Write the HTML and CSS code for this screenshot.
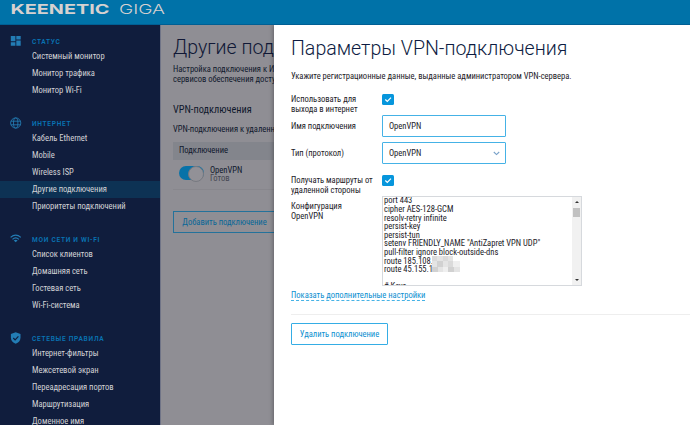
FILE: index.html
```html
<!DOCTYPE html>
<html lang="ru">
<head>
<meta charset="utf-8">
<title>Keenetic Giga</title>
<link rel="stylesheet" href="styles.css">
</head>
<body>
<header class="topbar">
  <svg class="logo" width="170" height="24" viewBox="0 0 170 24">
    <text class="logo-brand" x="10.5" y="13.8" textLength="99" lengthAdjust="spacingAndGlyphs">KEENETIC</text>
    <text class="logo-model" x="119" y="13.8" textLength="46" lengthAdjust="spacingAndGlyphs">GIGA</text>
  </svg>
</header>
<div class="layout">
  <nav class="sidebar">
    <section class="group">
      <svg class="group-icon" viewBox="0 0 12 12"><path d="M.8 1h4.6v5.3H.8zM.8 7.3h4.6v3.5H.8zM6.3 1h4.4v3.4H6.3zM6.3 5.5h4.4v5.3H6.3z" fill="#237db5"/></svg>
      <h2>Статус</h2>
      <ul><li>Системный монитор</li><li>Монитор трафика</li><li>Монитор Wi-Fi</li></ul>
    </section>
    <section class="group">
      <svg class="group-icon" viewBox="0 0 12 12" fill="none" stroke="#237db5" stroke-width=".85"><circle cx="5.7" cy="6" r="5.1"/><ellipse cx="5.7" cy="6" rx="2.2" ry="5.1"/><path d="M.9 4.2h9.6M.9 7.8h9.6"/></svg>
      <h2>Интернет</h2>
      <ul><li>Кабель Ethernet</li><li>Mobile</li><li>Wireless ISP</li><li class="active">Другие подключения</li><li>Приоритеты подключений</li></ul>
    </section>
    <section class="group">
      <svg class="group-icon" viewBox="0 0 12 12" fill="none" stroke="#237db5" stroke-width="1.25"><path d="M.6 4.4Q5.7-.2 10.8 4.4M2.5 6.4Q5.7 3.5 8.9 6.4"/><path d="M3.8 7.4Q5.7 5.9 7.6 7.4L5.7 9.3z" fill="#237db5" stroke="none"/></svg>
      <h2>Мои сети и Wi-Fi</h2>
      <ul><li>Список клиентов</li><li>Домашняя сеть</li><li>Гостевая сеть</li><li>Wi-Fi-система</li></ul>
    </section>
    <section class="group">
      <svg class="group-icon" viewBox="0 0 12 12"><path d="M5.7.2l4.8 1.9v3.7c0 2.9-2 5.1-4.8 6-2.8-.9-4.8-3.1-4.8-6V2.1z" fill="#237db5"/><path d="M3.3 6l1.8 1.8 3.3-3.5" fill="none" stroke="#101d3d" stroke-width="1.2"/></svg>
      <h2>Сетевые правила</h2>
      <ul><li>Интернет-фильтры</li><li>Межсетевой экран</li><li>Переадресация портов</li><li>Маршрутизация</li><li>Доменное имя</li></ul>
    </section>
  </nav>
  <main class="page">
    <h1>Другие под</h1>
    <p class="intro">Настройка подключения к И<br>сервисов обеспечения досту</p>
    <h3>VPN-подключения</h3>
    <p class="sub">VPN-подключения к удаленн</p>
    <div class="table-head">Подключение</div>
    <div class="table-row">
      <span class="switch"></span>
      <div class="conn"><span>OpenVPN</span><span class="state">Готов</span></div>
    </div>
    <button class="add">Добавить подключение</button>
  </main>
</div>
<aside class="drawer">
  <h1>Параметры VPN-подключения</h1>
  <p class="lead">Укажите регистрационные данные, выданные администратором VPN-сервера.</p>
  <div class="form">
    <label>Использовать для<br>выхода в интернет</label>
    <span class="check"><svg viewBox="0 0 11 11"><path d="M2.8 5.5l2 2 3.7-3.9"/></svg></span>
    <label class="name-label">Имя подключения</label>
    <div class="field name-field">OpenVPN</div>
    <label class="type-label">Тип (протокол)</label>
    <div class="field type-field">OpenVPN<svg class="chevron" viewBox="0 0 7 5"><path d="M.8 1l2.7 2.6L6.2 1"/></svg></div>
    <label class="routes-label">Получать маршруты от<br>удаленной стороны</label>
    <span class="check routes-check"><svg viewBox="0 0 11 11"><path d="M2.8 5.5l2 2 3.7-3.9"/></svg></span>
    <label class="config-label">Конфигурация<br>OpenVPN</label>
    <div class="config">
      <div class="config-text">
        <div>port 443</div><div>cipher AES-128-GCM</div><div>resolv-retry infinite</div><div>persist-key</div><div>persist-tun</div><div>setenv FRIENDLY_NAME "AntiZapret VPN UDP"</div><div>pull-filter ignore block-outside-dns</div><div>route 185.108.</div><div>route 45.155.1</div><div>&nbsp;</div><div class="cut"># Keys</div>
        <svg class="mosaic" width="28" height="16" viewBox="0 0 28 16" shape-rendering="crispEdges"><path fill="#e4e4e4" d="M0 0h21v5H0zM0 5h28v11H0z"/><path fill="#d1d1d1" d="M5 5h6v6H5zM0 11h6v5H0zM16 11h6v5h-6z"/><path fill="#dadada" d="M0 0h5v5H0zM11 0h5v5h-5zM16 5h5v6h-5z"/><path fill="#efefef" d="M11 11h5v5h-5zM21 5h7v6h-7z"/></svg>
      </div>
      <div class="scrollbar"><i class="up"></i><i class="thumb"></i><i class="down"></i></div>
    </div>
  </div>
  <a class="more">Показать дополнительные настройки</a>
  <hr>
  <button class="delete">Удалить подключение</button>
</aside>
</body>
</html>
```
FILE: styles.css
```css
* { box-sizing: border-box; }
body { margin: 0; width: 690px; height: 425px; overflow: hidden; position: relative; font: 8.55px/10px Roboto, sans-serif; font-stretch: 87.5%; letter-spacing: -.02px; color: #10182c; background: #8f8e94; }
h1, h2, h3, p, ul { margin: 0; padding: 0; font-weight: 400; }
h1, h2, h3 { letter-spacing: 0; font-stretch: 100%; }
ul { list-style: none; }
button { font: inherit; letter-spacing: inherit; background: none; padding: 0; display: block; white-space: nowrap; }

.topbar { height: 25px; background: #0072a8; border-bottom: 1px solid #005f94; }
.logo { display: block; fill: #d6d1d0; letter-spacing: 0; }
.logo-brand { font: 700 13.6px Inter, sans-serif; }
.logo-model { font: 300 13.6px Inter, sans-serif; }

.layout { display: flex; height: 400px; }
.sidebar { width: 161px; flex: none; background: #101d3d; border-right: 1px solid #707487; padding-top: 10px; overflow: hidden; }
.group { display: grid; grid-template-columns: 32px 1fr; grid-template-rows: 13px 1fr; height: 81.5px; }
.group:nth-child(2) { height: 116px; }
.group:nth-child(3) { height: 99px; }
.group:nth-child(4) { height: 130px; }
.group-icon { grid-area: 1 / 1; width: 12px; height: 12px; margin-left: 10px; }
.group h2 { grid-area: 1 / 2; font-size: 6.6px; font-weight: 600; line-height: 14px; letter-spacing: .7px; text-transform: uppercase; color: #0873b3; }
.group ul { grid-area: 2 / 1 / 3 / 3; }
.group li { height: 17.2px; padding-left: 32px; line-height: 17.2px; color: #d2d2d5; white-space: nowrap; }
.group li.active { background: #0d3254; }

.page { flex: 1; padding: 13px 0 0 12px; white-space: nowrap; }
.page h1 { font-size: 19.6px; font-weight: 350; line-height: 20px; color: #101836; }
.intro { margin-top: 7px; line-height: 9.6px; }
.page h3 { margin-top: 20px; font-size: 10.3px; font-stretch: 87.5%; line-height: 12px; }
.sub { margin-top: 8px; }
.table-head { margin-top: 8px; height: 18px; line-height: 17px; padding-left: 6px; background: #83858c; }
.table-row { height: 30px; border-bottom: 1px solid #88878d; display: flex; padding: 6px 6px; }
.switch { width: 25px; height: 14px; border-radius: 7px; background: #0872a8; margin-right: 6px; display: flex; justify-content: flex-end; }
.switch::after { content: ""; width: 14px; height: 14px; border: 1px solid #777980; border-radius: 50%; background: #929197; }
.conn { display: flex; flex-direction: column; line-height: 8px; }
.state { color: #454752; }
.add { margin-top: 21px; width: 103px; height: 22px; border: 1px solid #24729b; color: #086798; }

.drawer { position: absolute; left: 274px; top: 25px; width: 416px; height: 400px; background: #fff; padding: 14px 0 0 17px; box-shadow: -1px 0 4px rgba(0,0,0,.3); color: #1c2127; clip-path: inset(0 0 0 -6px); }
.drawer h1 { font-size: 19.6px; font-weight: 350; line-height: 20px; color: #0d1c42; white-space: nowrap; }
.lead { margin-top: 12px; line-height: 10px; white-space: nowrap; }
.form { display: grid; grid-template-columns: 91px auto; grid-template-rows: 21px 27px 27px 27px 90px; margin-top: 13px; justify-content: start; }
.form label { line-height: 10px; white-space: nowrap; }
.check { display: block; width: 12px; height: 11px; border-radius: 1.5px; background: #0796dc; }
.check svg { display: block; width: 12px; height: 11px; fill: none; stroke: #fff; stroke-width: 1.2; }
.field { width: 124px; height: 22px; border: 1px solid #45b2e6; border-radius: 1px; padding: 0 5px 0 6px; display: flex; align-items: center; justify-content: space-between; }
.name-label { padding-top: 6px; }
.type-label { padding-top: 6px; }
.routes-label { padding-top: 6px; }
.routes-check { margin-top: 6px; }
.config-label { padding-top: 5px; }
.chevron { width: 7px; height: 5px; fill: none; stroke: #77a0c8; stroke-width: 1.1; }
.config { width: 200px; height: 90px; border: 1px solid #d6d9dd; display: flex; overflow: hidden; }
.config-text { position: relative; flex: 1; margin-top: -.6px; padding-left: 1px; line-height: 8.6px; white-space: nowrap; }
.mosaic { position: absolute; left: 49px; top: 59.600px; }
.scrollbar { width: 9px; background: #f1f1f1; display: flex; flex-direction: column; align-items: center; }
.up, .down { border: 2px solid transparent; }
.up { border-bottom-color: #333; margin-top: 2px; }
.thumb { width: 7px; height: 9px; background: #c1c1c1; margin-top: 5px; }
.down { border-top-color: #333; margin-top: auto; margin-bottom: 2px; }
.more { display: block; width: max-content; margin-top: 4px; line-height: 10px; color: #0c8fd0; border-bottom: 1px dashed #45b2e6; }
hr { border: 0; height: 1px; background: #eee; margin: 13px 0 8px; }
.delete { width: 97px; height: 22px; border: 1px solid #35ade5; border-radius: 1px; color: #0c8fd0; }
```
